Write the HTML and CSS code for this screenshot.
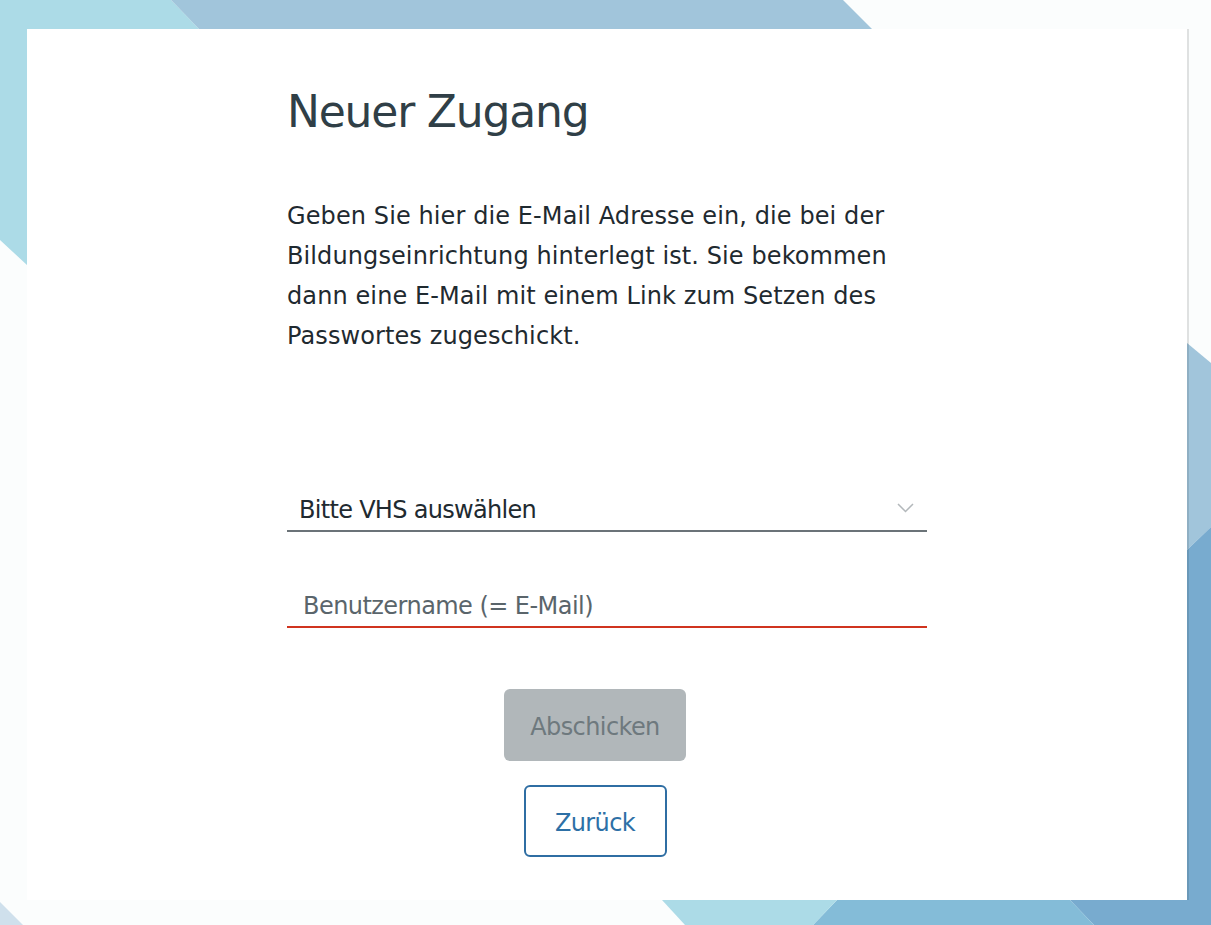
FILE: index.html
```html
<!DOCTYPE html>
<html lang="de">
<head>
<meta charset="utf-8">
<title>Neuer Zugang</title>
<link rel="stylesheet" href="styles.css">
</head>
<body>
<svg class="deco" width="1211" height="925" viewBox="0 0 1211 925" aria-hidden="true">
  <polygon fill="#acdbe7" points="0,0 171,0 199,29 27,29 27,265 0,240"/>
  <polygon fill="#a1c5db" points="171,0 843,0 872,29 199,29"/>
  <polygon fill="#a1c5db" points="1187,343 1211,363 1211,527 1187,550"/>
  <polygon fill="#78abcf" points="1187,550 1211,527 1211,925 1094,925 1070,900 1187,900"/>
  <polygon fill="#84bcd8" points="837,900 1070,900 1094,925 813,925"/>
  <polygon fill="#acdbe7" points="662,900 837,900 813,925 685,925"/>
  <polygon fill="#cfe0ec" points="0,902 23,925 0,925"/>
</svg>
<div class="page">
  <main class="card">
    <div class="content">
      <h1 class="title">Neuer Zugang</h1>
      <p class="intro">Geben Sie hier die E-Mail Adresse ein, die bei der<br>Bildungseinrichtung hinterlegt ist. Sie bekommen<br>dann eine E-Mail mit einem Link zum Setzen des<br>Passwortes zugeschickt.</p>
      <form class="form">
        <div class="select-wrap">
          <select class="select">
            <option>Bitte VHS auswählen</option>
          </select>
          <svg class="chevron" width="17" height="10" viewBox="0 0 17 10"><polyline points="1,1 8.5,8.5 16,1" fill="none" stroke="#b3b8bb" stroke-width="1.5"/></svg>
        </div>
        <input class="input" type="text" placeholder="Benutzername (= E-Mail)">
        <div class="actions">
          <button type="button" class="btn btn-submit" disabled>Abschicken</button>
          <button type="button" class="btn btn-back">Zurück</button>
        </div>
      </form>
    </div>
  </main>
</div>
</body>
</html>
```

FILE: styles.css
```css
html, body {
  margin: 0;
  padding: 0;
}
body {
  background: #fbfdfd;
  width: 1211px;
  height: 925px;
  overflow: hidden;
  position: relative;
  font-family: "DejaVu Sans", sans-serif;
}
.deco {
  position: absolute;
  left: 0;
  top: 0;
}
.page {
  position: relative;
  padding: 29px 0 0 27px;
}
.card {
  width: 1160px;
  height: 871px;
  background: #ffffff;
  box-shadow: 2px 0 0 rgba(0, 0, 0, 0.11);
  box-sizing: border-box;
  padding: 56px 0 0 260px;
}
.content {
  width: 640px;
}
.title {
  margin: 0;
  font-size: 44px;
  line-height: 53px;
  font-weight: normal;
  letter-spacing: -1.2px;
  color: #303f47;
}
.intro {
  margin: 58px 0 0 0;
  font-size: 24px;
  line-height: 40px;
  letter-spacing: 0.1px;
  color: #1f2a30;
  white-space: nowrap;
}
.form {
  margin-top: 126px;
  display: flex;
  flex-direction: column;
}
.select-wrap {
  position: relative;
}
.select {
  appearance: none;
  -webkit-appearance: none;
  width: 100%;
  height: 50px;
  border: none;
  border-bottom: 2px solid #6b7378;
  background: transparent;
  font-family: inherit;
  font-size: 24px;
  letter-spacing: -0.7px;
  color: #212a30;
  padding: 7px 0 0 12px;
  margin: 0;
  border-radius: 0;
  outline: none;
}
.chevron {
  position: absolute;
  right: 13px;
  top: 21px;
}
.input {
  margin-top: 46px;
  width: 100%;
  box-sizing: border-box;
  height: 50px;
  border: none;
  border-bottom: 2px solid #d0341f;
  background: transparent;
  font-family: inherit;
  font-size: 24px;
  letter-spacing: -0.55px;
  padding: 7px 0 0 16px;
  color: #212a30;
  outline: none;
}
.input::placeholder {
  color: #5a656b;
  opacity: 1;
}
.actions {
  margin-top: 61px;
  padding-right: 24px;
  display: flex;
  flex-direction: column;
  align-items: center;
  gap: 24px;
}
.btn {
  font-family: inherit;
  font-size: 24px;
  height: 72px;
  border-radius: 6px;
  box-sizing: border-box;
  margin: 0;
  padding: 4px 0 0 0;
  letter-spacing: -0.6px;
}
.btn-submit {
  width: 182px;
  background: #b1b7ba;
  color: #6e797e;
  border: none;
}
.btn-back {
  width: 143px;
  background: #ffffff;
  color: #2d70a6;
  border: 2px solid #2f6ea3;
}
```
